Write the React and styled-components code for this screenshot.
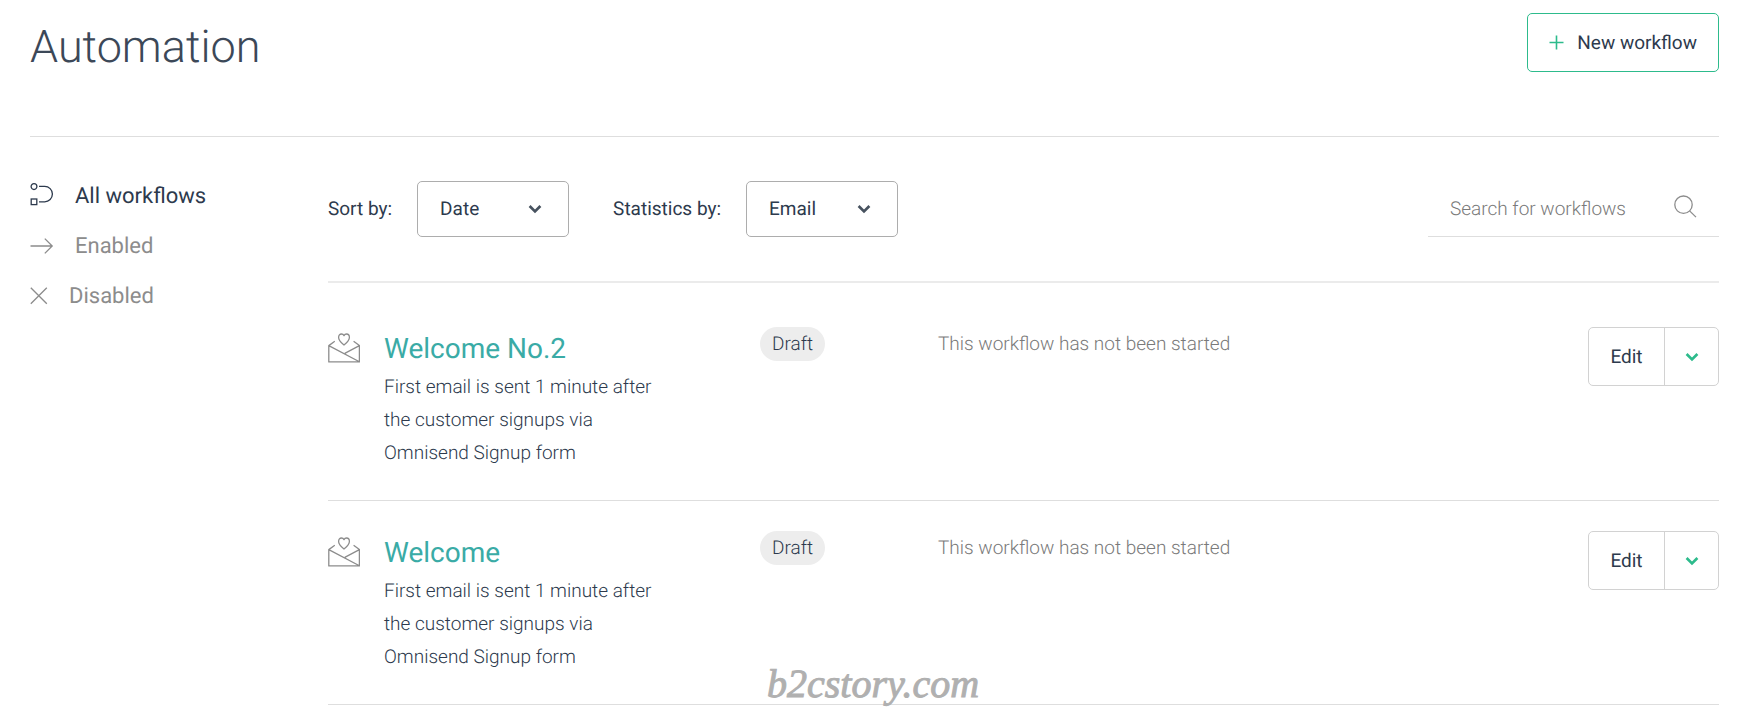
import React from "react";
import styled, { createGlobalStyle } from "styled-components";

const GlobalStyle = createGlobalStyle`
  *, *::before, *::after { box-sizing: border-box; }
  body {
    margin: 0;
    background: #fff;
    color: #2d3a4d;
    font-family: Roboto, "Liberation Sans", sans-serif;
    font-size: 19px;
    line-height: 24px;
    text-rendering: geometricPrecision;
  }
  button, input, select { font: inherit; color: inherit; text-rendering: inherit; }
  h1, h2, p, ul { margin: 0; padding: 0; }
  ul { list-style: none; }
`;

const Page = styled.div`
  position: relative;
  padding: 0 41px 13px 30px;
`;

const Header = styled.header`
  display: flex;
  justify-content: space-between;
  align-items: flex-start;
  padding: 13px 0 62px;
  border-bottom: 1px solid #dedede;
`;

const Title = styled.h1`
  padding-top: 7px;
  font-size: 45px;
  line-height: 54px;
  font-weight: 300;
  color: #3c4858;
`;

const NewButton = styled.button`
  display: flex;
  align-items: center;
  gap: 13px;
  height: 59px;
  padding: 0 21px;
  border: 1px solid #2dbb8c;
  border-radius: 5px;
  background: #fff;
  cursor: pointer;
`;

const Body = styled.div`
  display: flex;
  align-items: flex-start;
`;

const Sidebar = styled.nav`
  flex: 0 0 298px;
  padding-top: 35px;
`;

const NavLink = styled.a`
  display: flex;
  align-items: center;
  gap: 21px;
  height: 50px;
  font-size: 22px;
  color: ${(p) => (p.$active ? "#2d3a4d" : "#8c8c8c")};
  text-decoration: none;
`;

const Main = styled.main`
  flex: 1;
  min-width: 0;
`;

const Toolbar = styled.div`
  display: flex;
  align-items: center;
  padding: 44px 0;
  border-bottom: 2px solid #ebebeb;
`;

const Field = styled.div`
  display: flex;
  align-items: center;
  gap: 25px;
  margin-right: 44px;
`;

const SelectBox = styled.div`
  display: grid;
  align-items: center;
  width: 152px;
  > * { grid-area: 1 / 1; }
  > svg {
    justify-self: end;
    margin-right: 27px;
    pointer-events: none;
  }
`;

const Select = styled.select`
  width: 100%;
  height: 56px;
  padding: 0 48px 0 22px;
  border: 1px solid #adadad;
  border-radius: 5px;
  background: #fff;
  appearance: none;
`;

const Search = styled.label`
  display: flex;
  align-items: center;
  width: 291px;
  height: 56px;
  margin-left: auto;
  padding: 0 22px;
  border-bottom: 1px solid #dedede;
  > svg { margin-bottom: 4px; }
`;

const SearchInput = styled.input`
  flex: 1;
  min-width: 0;
  padding: 0;
  border: 0;
  outline: 0;
  background: none;
  font-weight: 300;
  &::placeholder { color: #7a7a7a; opacity: 1; }
`;

const List = styled.ul`
  padding-top: 14px;
`;

const Row = styled.li`
  display: grid;
  grid-template-columns: 56px minmax(0, 376fr) minmax(0, 178fr) minmax(0, 650fr) auto;
  align-items: start;
  padding: 30px 0;
  border-bottom: 1px solid #dedede;
`;

const RowIcon = styled.div`
  padding-top: 6px;
`;

const Summary = styled.div`
  padding: 1px 0;
`;

const Name = styled.h2`
  font-size: 28px;
  line-height: 42px;
  font-weight: 400;
  a { color: #3aaba6; text-decoration: none; }
`;

const Description = styled.p`
  max-width: 280px;
  line-height: 33px;
  font-weight: 300;
`;

const Pill = styled.span`
  justify-self: start;
  padding: 0 12px;
  border-radius: 17px;
  background: #ededed;
  line-height: 34px;
  font-weight: 300;
`;

const Status = styled.p`
  line-height: 34px;
  font-weight: 300;
  color: #7a7a7a;
`;

const Actions = styled.div`
  display: flex;
  height: 59px;
  border: 1px solid #d2d2d2;
  border-radius: 5px;
`;

const Action = styled.button`
  display: flex;
  align-items: center;
  justify-content: center;
  width: ${(p) => p.$width}px;
  padding: 0;
  border: 0;
  background: none;
  cursor: pointer;
  & + & { border-left: 1px solid #d2d2d2; }
`;

const Watermark = styled.div`
  position: absolute;
  bottom: 12px;
  left: 767px;
  font-family: "Liberation Serif", serif;
  font-style: italic;
  font-size: 40px;
  line-height: 44px;
  color: #b0b0b0;
  -webkit-text-stroke: 1px #b0b0b0;
  pointer-events: none;
`;

const Chevron = ({ color = "#47525f" }) => (
  <svg width="14" height="10" viewBox="0 0 14 10" fill="none" stroke={color} strokeWidth="2.7" aria-hidden="true">
    <path d="M1.6 2 7 7.4 12.4 2" />
  </svg>
);

const FlowIcon = () => (
  <svg width="24" height="28" viewBox="0 0 24 28" fill="none" stroke="currentColor" strokeWidth="1.3" aria-hidden="true">
    <circle cx="4" cy="3.6" r="2.9" />
    <rect x="1.2" y="16" width="5.6" height="5.6" />
    <path d="M9 3.4h5.7a7.7 7.7 0 0 1 0 15.4H9" />
  </svg>
);

const ArrowIcon = () => (
  <svg width="24" height="20" viewBox="0 0 24 20" fill="none" stroke="currentColor" strokeWidth="1.3" aria-hidden="true">
    <path d="M.5 9h21.8M14.8 1.6 22.2 9 14.8 16.4" />
  </svg>
);

const CrossIcon = () => (
  <svg width="18" height="20" viewBox="0 0 18 20" fill="none" stroke="currentColor" strokeWidth="1.3" aria-hidden="true">
    <path d="m.8.8 16 16m0-16-16 16" />
  </svg>
);

const PlusIcon = () => (
  <svg width="15" height="15" viewBox="0 0 15 15" fill="none" stroke="#2dbb8c" strokeWidth="1.6" aria-hidden="true">
    <path d="M7.5.5v14M.5 7.5h14" />
  </svg>
);

const SearchIcon = () => (
  <svg width="24" height="24" viewBox="0 0 24 24" fill="none" stroke="#8c8c8c" strokeWidth="1.3" aria-hidden="true">
    <circle cx="10.5" cy="9.7" r="8.7" />
    <path d="m16.6 15.9 6.4 6.2" />
  </svg>
);

const MailIcon = () => (
  <svg width="32" height="30" viewBox="0 0 32 30" fill="none" stroke="#8c8c8c" strokeWidth="1.3" strokeLinejoin="round" aria-hidden="true">
    <path d="M6.8 8.3.8 12.6v16.3h30.6V12.6l-5.8-4.3M.8 12.6l30.6 16.2M31.4 12.6 16.8 20.4" />
    <path d="M16 12c-2-1.6-5.4-4.4-5.4-7.6 0-2 1.2-3.4 2.9-3.4 1.2 0 2 .6 2.5 1.6.5-1 1.3-1.6 2.5-1.6 1.7 0 2.9 1.4 2.9 3.4 0 3.2-3.4 6-5.4 7.6z" />
  </svg>
);

const workflows = ["Welcome No.2", "Welcome"];

export default function App() {
  return (
    <Page>
      <GlobalStyle />
      <Header>
        <Title>Automation</Title>
        <NewButton type="button">
          <PlusIcon />
          New workflow
        </NewButton>
      </Header>
      <Body>
        <Sidebar>
          <NavLink href="#all" $active><FlowIcon />All workflows</NavLink>
          <NavLink href="#enabled"><ArrowIcon />Enabled</NavLink>
          <NavLink href="#disabled"><CrossIcon />Disabled</NavLink>
        </Sidebar>
        <Main>
          <Toolbar>
            <Field>
              <label htmlFor="sort">Sort by:</label>
              <SelectBox>
                <Select id="sort"><option>Date</option></Select>
                <Chevron />
              </SelectBox>
            </Field>
            <Field>
              <label htmlFor="stats">Statistics by:</label>
              <SelectBox>
                <Select id="stats"><option>Email</option></Select>
                <Chevron />
              </SelectBox>
            </Field>
            <Search>
              <SearchInput type="search" placeholder="Search for workflows" aria-label="Search for workflows" />
              <SearchIcon />
            </Search>
          </Toolbar>
          <List>
            {workflows.map((name) => (
              <Row key={name}>
                <RowIcon><MailIcon /></RowIcon>
                <Summary>
                  <Name><a href="#workflow">{name}</a></Name>
                  <Description>
                    First email is sent 1 minute after the customer signups via Omnisend Signup form
                  </Description>
                </Summary>
                <Pill>Draft</Pill>
                <Status>This workflow has not been started</Status>
                <Actions>
                  <Action type="button" $width={75}>Edit</Action>
                  <Action type="button" $width={54} aria-label={`More actions for ${name}`}>
                    <Chevron color="#2dbb8c" />
                  </Action>
                </Actions>
              </Row>
            ))}
          </List>
        </Main>
      </Body>
      <Watermark>b2cstory.com</Watermark>
    </Page>
  );
}
